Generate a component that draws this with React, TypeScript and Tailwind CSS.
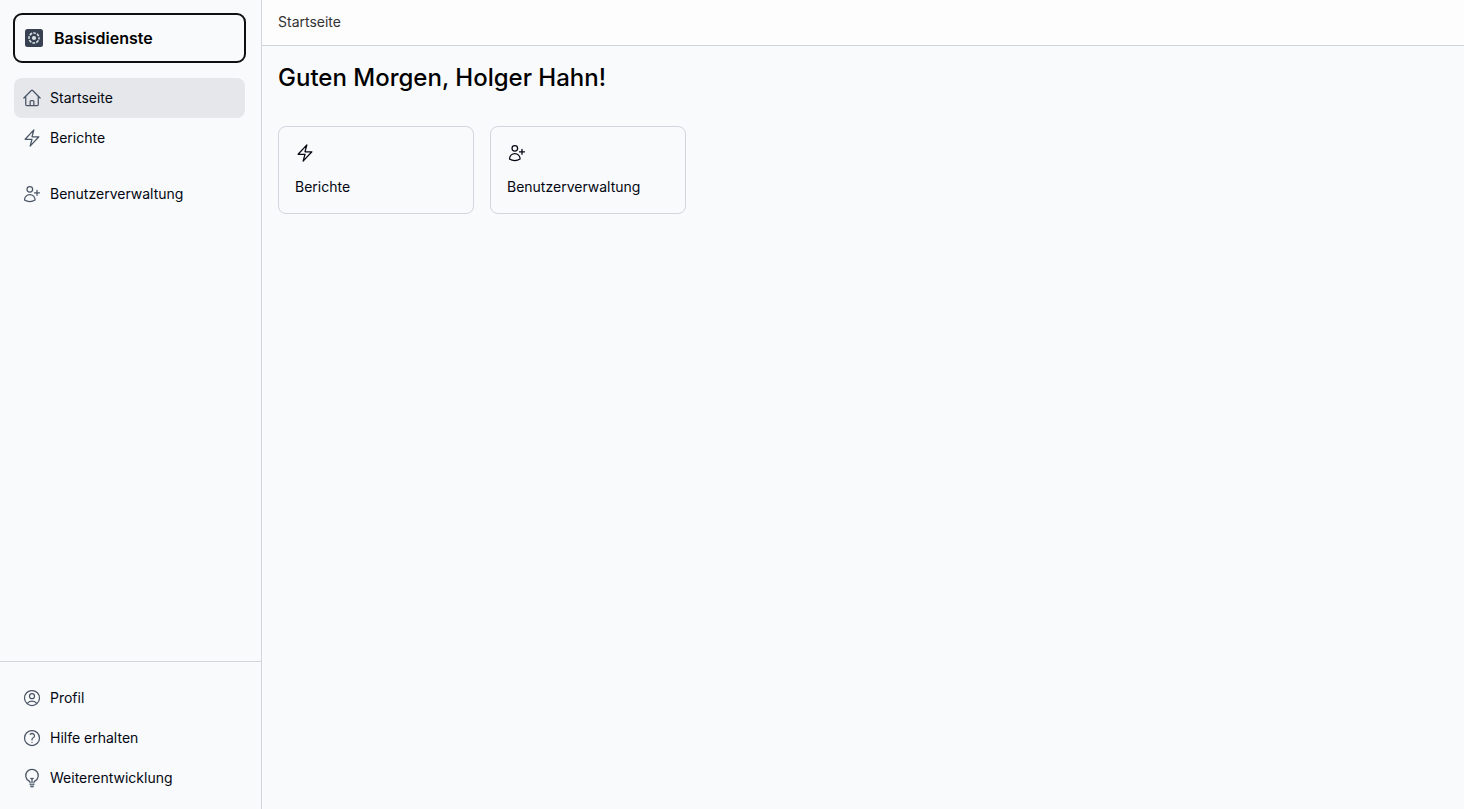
import React from 'react';
import {
  HiOutlineBolt,
  HiOutlineHome,
  HiOutlineLightBulb,
  HiOutlineQuestionMarkCircle,
  HiOutlineUserCircle,
} from 'react-icons/hi2';

interface LinkItem {
  label: string;
  href: string;
  icon: React.ComponentType<{ className?: string }>;
}

const UserPlusIcon: React.FC<{ className?: string }> = ({ className }) => (
  <svg
    viewBox="0 0 24 24"
    fill="none"
    stroke="currentColor"
    strokeWidth="1.5"
    strokeLinecap="round"
    strokeLinejoin="round"
    className={className}
    aria-hidden="true"
  >
    <path d="M18 7.5v3m0 0v3m0-3h3m-3 0h-3m-2.25-4.125a3.375 3.375 0 1 1-6.75 0 3.375 3.375 0 0 1 6.75 0ZM3 19.235v-.11a6.375 6.375 0 0 1 12.75 0v.109A12.318 12.318 0 0 1 9.374 21c-2.331 0-4.512-.645-6.374-1.766Z" />
  </svg>
);

const startseite: LinkItem = { label: 'Startseite', href: '#startseite', icon: HiOutlineHome };
const berichte: LinkItem = { label: 'Berichte', href: '#berichte', icon: HiOutlineBolt };
const benutzer: LinkItem = { label: 'Benutzerverwaltung', href: '#benutzer', icon: UserPlusIcon };

const mainGroups: LinkItem[][] = [[startseite, berichte], [benutzer]];

const footerItems: LinkItem[] = [
  { label: 'Profil', href: '#profil', icon: HiOutlineUserCircle },
  { label: 'Hilfe erhalten', href: '#hilfe', icon: HiOutlineQuestionMarkCircle },
  { label: 'Weiterentwicklung', href: '#weiterentwicklung', icon: HiOutlineLightBulb },
];

const Logo: React.FC = () => (
  <svg viewBox="0 0 18 18" className="size-[18px]" aria-hidden="true">
    <rect width="18" height="18" rx="2.5" fill="#374151" />
    <circle cx="9" cy="9" r="2.1" fill="#d9dee3" />
    <circle
      cx="9"
      cy="9"
      r="5"
      fill="none"
      stroke="#d9dee3"
      strokeWidth="1.6"
      strokeDasharray="2.8 1.127"
      strokeDashoffset="1.4"
    />
  </svg>
);

const NavLink: React.FC<{ item: LinkItem; active?: boolean }> = ({ item, active = false }) => {
  const Icon = item.icon;

  return (
    <a
      href={item.href}
      aria-current={active ? 'page' : undefined}
      className={`flex h-10 items-center gap-2 rounded-lg px-2 text-sm text-gray-950 ${
        active ? 'bg-gray-200' : 'hover:bg-gray-100'
      }`}
    >
      <Icon className="size-5 text-gray-600" />
      {item.label}
    </a>
  );
};

const Tile: React.FC<{ item: LinkItem }> = ({ item }) => {
  const Icon = item.icon;

  return (
    <a
      href={item.href}
      className="flex w-49 flex-col gap-3.5 rounded-lg border border-gray-300 p-4 text-sm text-gray-950"
    >
      <Icon className="size-5" />
      {item.label}
    </a>
  );
};

const App: React.FC = () => {
  return (
    <div className="flex min-h-screen bg-[#f9fafc] font-['Inter',sans-serif] text-black">
      <aside className="flex w-[262px] shrink-0 flex-col border-r border-gray-300">
        <div className="flex-1 py-3.5 pr-4 pl-3.5">
          <button
            type="button"
            className="flex h-12 w-full items-center gap-[11px] rounded-lg px-[11px] font-semibold outline-2 -outline-offset-1 outline-[#101010]"
          >
            <Logo />
            Basisdienste
          </button>

          <nav className="mt-4 flex flex-col gap-4">
            {mainGroups.map((group, i) => (
              <div key={i}>
                {group.map((item) => (
                  <NavLink key={item.label} item={item} active={item === startseite} />
                ))}
              </div>
            ))}
          </nav>
        </div>

        <nav className="border-t border-gray-300 pt-4 pr-4 pb-[11px] pl-3.5">
          {footerItems.map((item) => (
            <NavLink key={item.label} item={item} />
          ))}
        </nav>
      </aside>

      <div className="flex min-w-0 flex-1 flex-col">
        <header className="border-b border-gray-300 bg-[#fdfdfd] px-4 pt-3 pb-[13px]">
          <a href="#startseite" className="block text-sm text-[#333333]">
            Startseite
          </a>
        </header>

        <main className="p-4">
          <h1 className="text-2xl font-medium">Guten Morgen, Holger Hahn!</h1>
          <div className="mt-8 flex flex-wrap gap-4">
            <Tile item={berichte} />
            <Tile item={benutzer} />
          </div>
        </main>
      </div>
    </div>
  );
};

export default App;
